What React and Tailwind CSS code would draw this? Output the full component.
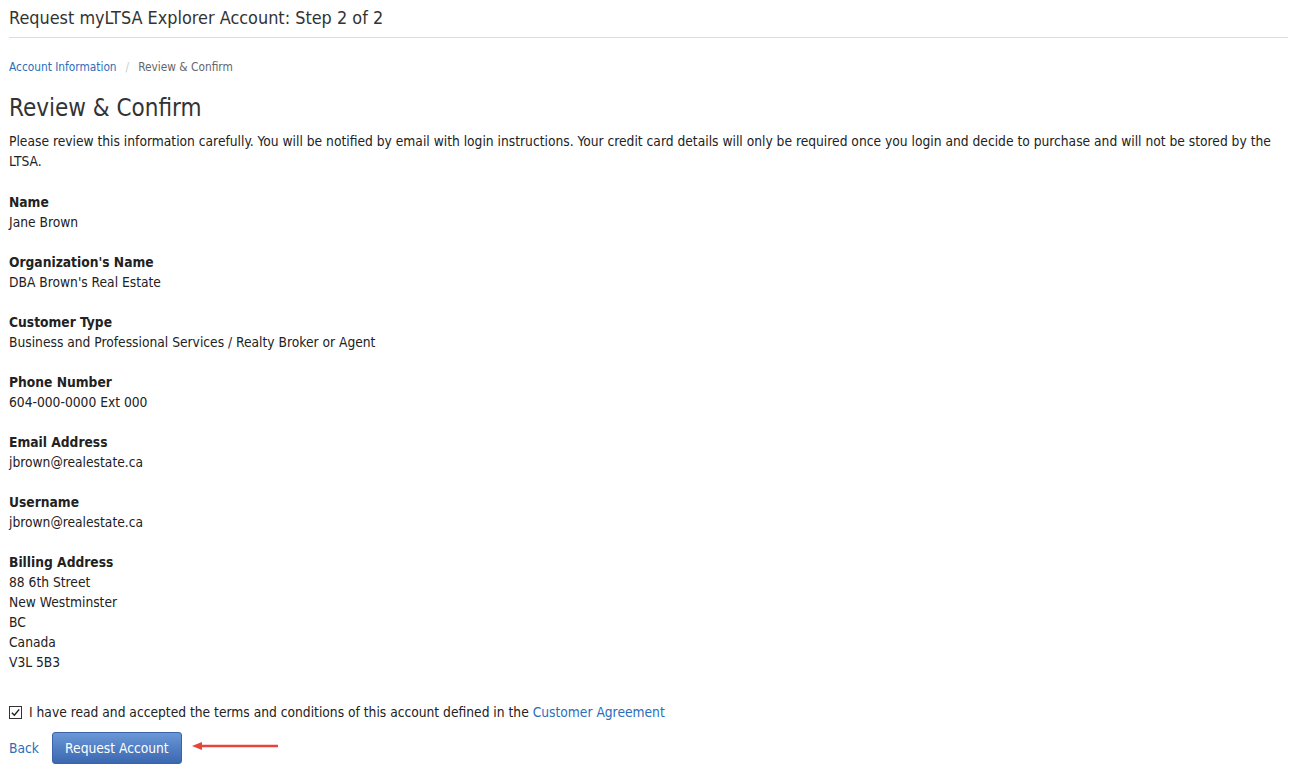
const fields = [
  { label: "Name", lines: ["Jane Brown"] },
  { label: "Organization's Name", lines: ["DBA Brown's Real Estate"] },
  {
    label: "Customer Type",
    lines: ["Business and Professional Services / Realty Broker or Agent"],
  },
  { label: "Phone Number", lines: ["604-000-0000 Ext 000"] },
  { label: "Email Address", lines: ["jbrown@realestate.ca"] },
  { label: "Username", lines: ["jbrown@realestate.ca"] },
  {
    label: "Billing Address",
    lines: ["88 6th Street", "New Westminster", "BC", "Canada", "V3L 5B3"],
  },
];

function Field({ label, lines }) {
  return (
    <div className="mb-5">
      <div className="font-bold">{label}</div>
      {lines.map((l) => (
        <div key={l}>{l}</div>
      ))}
    </div>
  );
}

export default function App() {
  return (
    <div
      className="min-h-screen bg-white pl-[9px] pr-[3px] text-[13.7px] leading-5 text-[#222]"
      style={{ fontFamily: '"DejaVu Sans Condensed", "DejaVu Sans", sans-serif' }}
    >
      <h1 className="pt-[6px] pb-[7px] text-[17.9px] leading-6 text-[#333] border-b border-[#ddd]">
        Request myLTSA Explorer Account: Step 2 of 2
      </h1>

      <nav className="mt-[21px] flex items-center text-[11.8px] leading-4">
        <a href="#" className="text-[#2a6ebb]">Account Information</a>
        <span className="px-[9px] text-[#ccc]">/</span>
        <span className="text-[#666]">Review &amp; Confirm</span>
      </nav>

      <h2 className="mt-[17px] text-[24px] leading-8 text-[#333]">Review &amp; Confirm</h2>

      <p className="mt-[7px] mb-[21px]">
        Please review this information carefully. You will be notified by email with login
        instructions. Your credit card details will only be required once you login and decide to
        purchase and will not be stored by the LTSA.
      </p>

      {fields.map((f) => (
        <Field key={f.label} {...f} />
      ))}

      <label className="mt-[30px] flex items-center gap-[7px]">
        <span className="flex h-[13px] w-[13px] items-center justify-center border border-[#333] bg-white">
          <svg viewBox="0 0 12 12" className="h-[11px] w-[11px]">
            <path d="M2 6.2 L4.8 9 L10 2.6" fill="none" stroke="#222" strokeWidth="1.6" />
          </svg>
        </span>
        <span>
          I have read and accepted the terms and conditions of this account defined in the{" "}
          <a href="#" className="text-[#2a6ebb]">Customer Agreement</a>
        </span>
      </label>

      <div className="mt-[10px] flex items-center">
        <a href="#" className="text-[#2a6ebb]">Back</a>
        <button className="ml-[13px] h-[32px] w-[130px] rounded-[3px] border border-[#3a64a6] bg-gradient-to-b from-[#6a97d6] to-[#3b68b1] text-white">
          Request Account
        </button>
        <svg width="90" height="10" viewBox="0 0 90 10" className="ml-[10px] -mt-[4px]">
          <line x1="8" y1="5" x2="86" y2="5" stroke="#e8443a" strokeWidth="2.4" />
          <path d="M0 5 L10 1 L10 9 Z" fill="#e8443a" />
        </svg>
      </div>
    </div>
  );
}
